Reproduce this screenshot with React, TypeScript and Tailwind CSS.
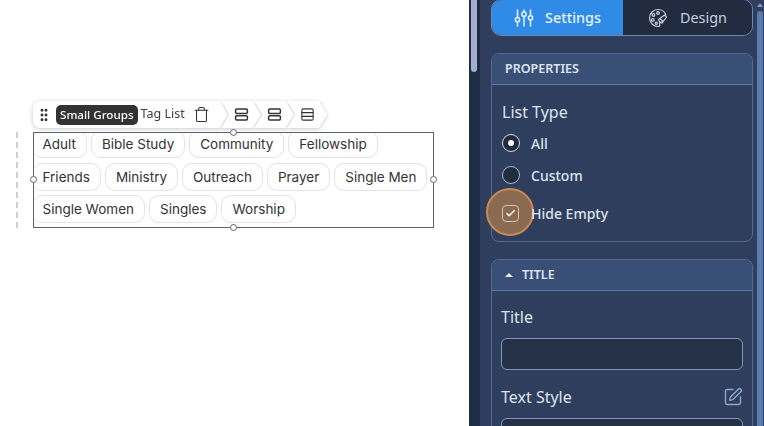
import { Check, GripVertical, Rows3, SquarePen, Trash } from "lucide-react";

const rows = [
    ["Adult", "Bible Study", "Community", "Fellowship"],
    ["Friends", "Ministry", "Outreach", "Prayer", "Single Men"],
    ["Single Women", "Singles", "Worship"],
];

function SplitRows() {
    return (
        <svg width="15" height="15" viewBox="0 0 16 16" fill="none" stroke="#333338" strokeWidth="1.6">
            <rect x="1.7" y="2.2" width="12.6" height="4.6" rx="1.2" />
            <rect x="1.7" y="9.2" width="12.6" height="4.6" rx="1.2" />
        </svg>
    );
}

function SettingsIcon() {
    return (
        <svg width="20" height="20" viewBox="0 0 20 20" fill="none" stroke="#e8f2fd" strokeWidth="1.5">
            <path d="M3.5 1.5v8M3.5 14v4.5M10 1.5v2.5M10 8.5v10M16.5 1.5v6M16.5 12v6.5" />
            <circle cx="3.5" cy="11.7" r="2.1" />
            <circle cx="10" cy="6.2" r="2.1" />
            <circle cx="16.5" cy="9.8" r="2.1" />
        </svg>
    );
}

function DesignIcon() {
    return (
        <svg width="20" height="20" viewBox="0 0 20 20" fill="none" stroke="#c5d0e2" strokeWidth="1.2">
            <path d="M10 1.5a8.5 8.5 0 1 0 0 17c1.6 0 2-1 1.6-2.2-.4-1.3.2-2.3 1.7-2.3h2" />
            <path d="M10 1.5c4 0 7.2 2.6 8 6" />
            <circle cx="5.5" cy="7" r="1.3" />
            <circle cx="10" cy="5" r="1.3" />
            <circle cx="4.8" cy="12" r="1.3" />
            <circle cx="8.3" cy="15.2" r="1.1" />
            <path d="M10.5 11.5l6-4.5 2 2-4.5 6-2-.5z" />
            <path d="M12 10.5l3 3" />
        </svg>
    );
}

function App() {
    return (
        <div className="flex h-[426px] w-[764px] overflow-hidden bg-white font-['Noto_Sans',sans-serif]">
            {/* canvas */}
            <main className="relative flex w-[469px] shrink-0 items-start pl-[16px] pt-[101px]">
                <div className="mt-[31px] h-[96px] w-0 border-l-2 border-dashed border-[#cfcfcf]" />
                <div className="ml-[15px] flex flex-col">
                    <div className="flex h-[27px] items-stretch drop-shadow-[0_1px_2px_rgba(0,0,0,0.22)]">
                        <div className="flex w-[195px] items-center rounded-l-[7px] bg-white pl-[3px] [clip-path:polygon(0_0,187px_0,195px_50%,187px_100%,0_100%)]">
                            <GripVertical size={16} strokeWidth={2.4} color="#333338" />
                            <span className="ml-[4px] flex h-[20px] items-center rounded-[5px] bg-[#333333] px-[4px] text-[11.6px] font-medium text-white">
                                Small Groups
                            </span>
                            <span className="ml-[3px] text-[12.5px] text-[#3f3f46]">Tag List</span>
                            <Trash size={17} strokeWidth={1.5} color="#333338" className="ml-[8px]" />
                        </div>
                        <div className="-ml-[7px] flex w-[40px] items-center justify-center bg-white pl-[1px] [clip-path:polygon(0_0,32px_0,40px_50%,32px_100%,0_100%,8px_50%)]">
                            <SplitRows />
                        </div>
                        <div className="-ml-[7px] flex w-[40px] items-center justify-center bg-white pl-[1px] [clip-path:polygon(0_0,32px_0,40px_50%,32px_100%,0_100%,8px_50%)]">
                            <SplitRows />
                        </div>
                        <div className="-ml-[7px] flex w-[40px] items-center justify-center bg-white pl-[1px] [clip-path:polygon(0_0,32px_0,40px_50%,32px_100%,0_100%,8px_50%)]">
                            <Rows3 size={15} strokeWidth={1.7} color="#333338" />
                        </div>
                    </div>
                    <div className="relative mt-[4px] h-[96px] w-[401px] border-[1.5px] border-[#5b6069]">
                        <div className="h-full overflow-hidden">
                            <div className="-ml-[2.5px] -mt-[2.6px] flex flex-col gap-[4.5px]">
                                {rows.map((row) => (
                                    <div key={row[0]} className="flex gap-[4px]">
                                        {row.map((tag) => (
                                            <span
                                                key={tag}
                                                className="flex h-[28px] shrink-0 items-center whitespace-nowrap rounded-[10px] border border-[#e2e2e2] px-[10px] font-['Inter',sans-serif] text-[13.5px] text-[#333333]"
                                            >
                                                {tag}
                                            </span>
                                        ))}
                                    </div>
                                ))}
                            </div>
                        </div>
                        <span className="absolute -top-[4px] left-[196px] size-[7px] rounded-full border border-[#5b6575] bg-white" />
                        <span className="absolute -bottom-[4px] left-[196px] size-[7px] rounded-full border border-[#5b6575] bg-white" />
                        <span className="absolute -left-[4px] top-[43px] size-[7px] rounded-full border border-[#5b6575] bg-white" />
                        <span className="absolute -right-[4px] top-[43px] size-[7px] rounded-full border border-[#5b6575] bg-white" />
                    </div>
                </div>
            </main>

            {/* left scrollbar */}
            <div className="w-[11px] shrink-0 bg-[#1f2d45] pl-[2px]">
                <div className="h-[72px] w-[6px] rounded-b-[3px] bg-[#a3aed0]" />
            </div>

            {/* panel */}
            <aside className="flex w-[275px] shrink-0 flex-col gap-[17px] bg-[#2f3e5d] pl-[11px] pr-[2px] text-[#dce4f0]">
                <div className="-mt-[1px] flex h-[37px] shrink-0 overflow-hidden rounded-[10px] border border-[#6f87ab] text-[14.4px]">
                    <div className="flex w-[131px] items-center justify-center gap-[11px] bg-[#2f8be6] font-medium text-[#e8f2fd]">
                        <SettingsIcon />
                        Settings
                    </div>
                    <div className="flex flex-1 items-center justify-center gap-[12px] bg-[#212c41] text-[#c5d0e2]">
                        <DesignIcon />
                        Design
                    </div>
                </div>

                <section className="h-[189px] shrink-0 rounded-[8px] border border-[#4f6a94]">
                    <div className="flex h-[31px] items-center rounded-t-[8px] border-b border-[#5d7aa6] bg-[#3a4f75] pl-[13px] text-[12.5px] font-semibold">
                        PROPERTIES
                    </div>
                    <div className="pl-[10px] pt-[16px]">
                        <div className="text-[16px] leading-[22px]">List Type</div>
                        <div className="mt-[9px] flex h-[22px] items-center gap-[11px] text-[14px] font-medium">
                            <span className="flex size-[18px] items-center justify-center rounded-full border border-[#d5dcea] bg-[#212c41]">
                                <span className="size-[6px] rounded-full bg-white" />
                            </span>
                            All
                        </div>
                        <div className="mt-[10px] flex h-[22px] items-center gap-[11px] text-[14px] font-medium">
                            <span className="size-[18px] rounded-full border border-[#aab6cc] bg-[#212c41]" />
                            Custom
                        </div>
                        <div className="mt-[16px] flex h-[22px] items-center gap-[11px] text-[14px] font-medium">
                            <span className="relative -ml-[1px] mr-[1px] flex size-[18px] items-center justify-center">
                                <span className="absolute -left-[15px] -top-[16px] size-[48px] rounded-full border-2 border-[#c58a55] bg-[#8a6a50]" />
                                <span className="relative flex size-[17px] items-center justify-center rounded-[4px] border border-[#d9c3ae] bg-[#8a6a50]">
                                    <Check size={11} strokeWidth={3} color="#ffffff" />
                                </span>
                            </span>
                            <span className="relative">Hide Empty</span>
                        </div>
                    </div>
                </section>

                <section className="flex-1 rounded-t-[8px] border border-b-0 border-[#4f6a94]">
                    <div className="flex h-[31px] items-center rounded-t-[8px] border-b border-[#5d7aa6] bg-[#3a4f75] pl-[13px] text-[12.5px] font-semibold">
                        <span className="mr-[9px] h-0 w-0 border-x-[4px] border-b-[4px] border-x-transparent border-b-[#e8edf5]" />
                        TITLE
                    </div>
                    <div className="px-[9px] pt-[15px]">
                        <div className="text-[16px] leading-[22px]">Title</div>
                        <div className="mt-[10px] h-[32px] rounded-[6px] border border-[#8396b6] bg-[#253147]" />
                        <div className="mt-[16px] flex h-[22px] items-center justify-between">
                            <span className="text-[16px]">Text Style</span>
                            <SquarePen size={20} strokeWidth={1.7} color="#8fa6cc" />
                        </div>
                        <div className="mt-[10px] h-[32px] rounded-[6px] border border-[#8396b6] bg-[#253147]" />
                    </div>
                </section>
            </aside>

            {/* right scrollbar */}
            <div className="flex w-[9px] shrink-0 flex-col items-center bg-[#2f3e5d]">
                <span className="mt-[3px] h-0 w-0 border-x-[3px] border-b-[4px] border-x-transparent border-b-[#7f97c2]" />
                <div className="mt-[4px] h-[420px] w-[6px] rounded-t-[3px] bg-[#5a7ab0]" />
            </div>
        </div>
    );
}

export default App;
